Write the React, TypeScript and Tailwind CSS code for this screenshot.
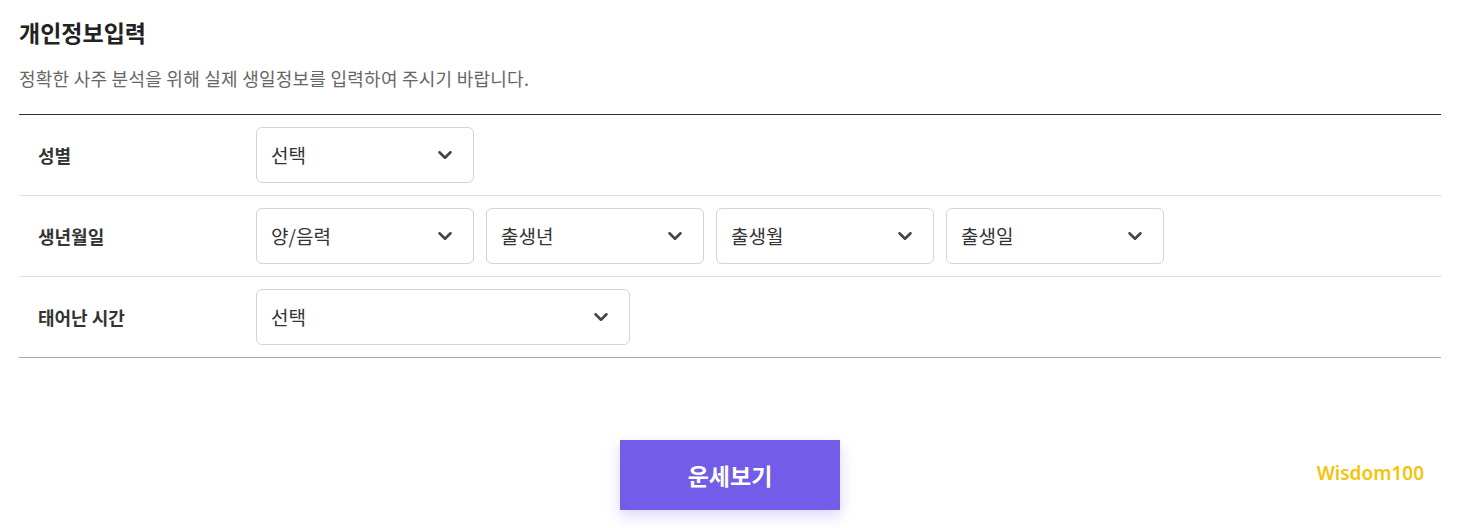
import { ChevronDown } from "lucide-react";

function Select({ label, width }: { label: string; width: string }) {
  return (
    <div
      className={`flex h-[56px] ${width} items-center justify-between rounded-[6px] border border-[#d4d4d4] bg-white pl-[14px] pr-[17px]`}
    >
      <span className="text-[19px] text-[#333]">{label}</span>
      <ChevronDown className="h-[22px] w-[22px] text-[#444]" strokeWidth={2.8} />
    </div>
  );
}

export default function App() {
  const rows = [
    { title: "성별", selects: [{ label: "선택", width: "w-[218px]" }] },
    {
      title: "생년월일",
      selects: [
        { label: "양/음력", width: "w-[218px]" },
        { label: "출생년", width: "w-[218px]" },
        { label: "출생월", width: "w-[218px]" },
        { label: "출생일", width: "w-[218px]" },
      ],
    },
    { title: "태어난 시간", selects: [{ label: "선택", width: "w-[374px]" }] },
  ];

  return (
    <div
      className="min-h-[528px] bg-white pl-[19px] pr-[24px] pt-[17px] pb-[18px]"
      style={{ fontFamily: '"Noto Sans CJK KR", "Noto Sans", sans-serif' }}
    >
      <h1 className="text-[23px] font-bold leading-[30px] text-[#222]">개인정보입력</h1>
      <p className="mt-[19px] text-[18px] leading-[24px] tracking-[0.25px] text-[#666]">
        정확한 사주 분석을 위해 실제 생일정보를 입력하여 주시기 바랍니다.
      </p>

      <div className="mt-[24px] border-t border-b border-t-[#333] border-b-[#aaa]">
        {rows.map((row, i) => (
          <div
            key={row.title}
            className={`flex items-center ${i > 0 ? "h-[81px] border-t border-[#e0e0e0]" : "h-[80px]"}`}
          >
            <div className="w-[237px] pl-[19px] text-[18px] font-bold text-[#333]">{row.title}</div>
            <div className="flex gap-[12px]">
              {row.selects.map((s) => (
                <Select key={s.label} label={s.label} width={s.width} />
              ))}
            </div>
          </div>
        ))}
      </div>

      <div className="relative mt-[82px] flex justify-center">
        <button className="h-[70px] w-[220px] bg-[#725ce8] text-[23px] font-bold text-white shadow-[0_6px_14px_rgba(114,92,232,0.25)]">
          운세보기
        </button>
        <span
          className="absolute right-[17px] top-[19px] text-[19px] font-semibold text-[#f5c20c]"
          style={{ fontFamily: '"Noto Sans", sans-serif' }}
        >
          Wisdom100
        </span>
      </div>
    </div>
  );
}
